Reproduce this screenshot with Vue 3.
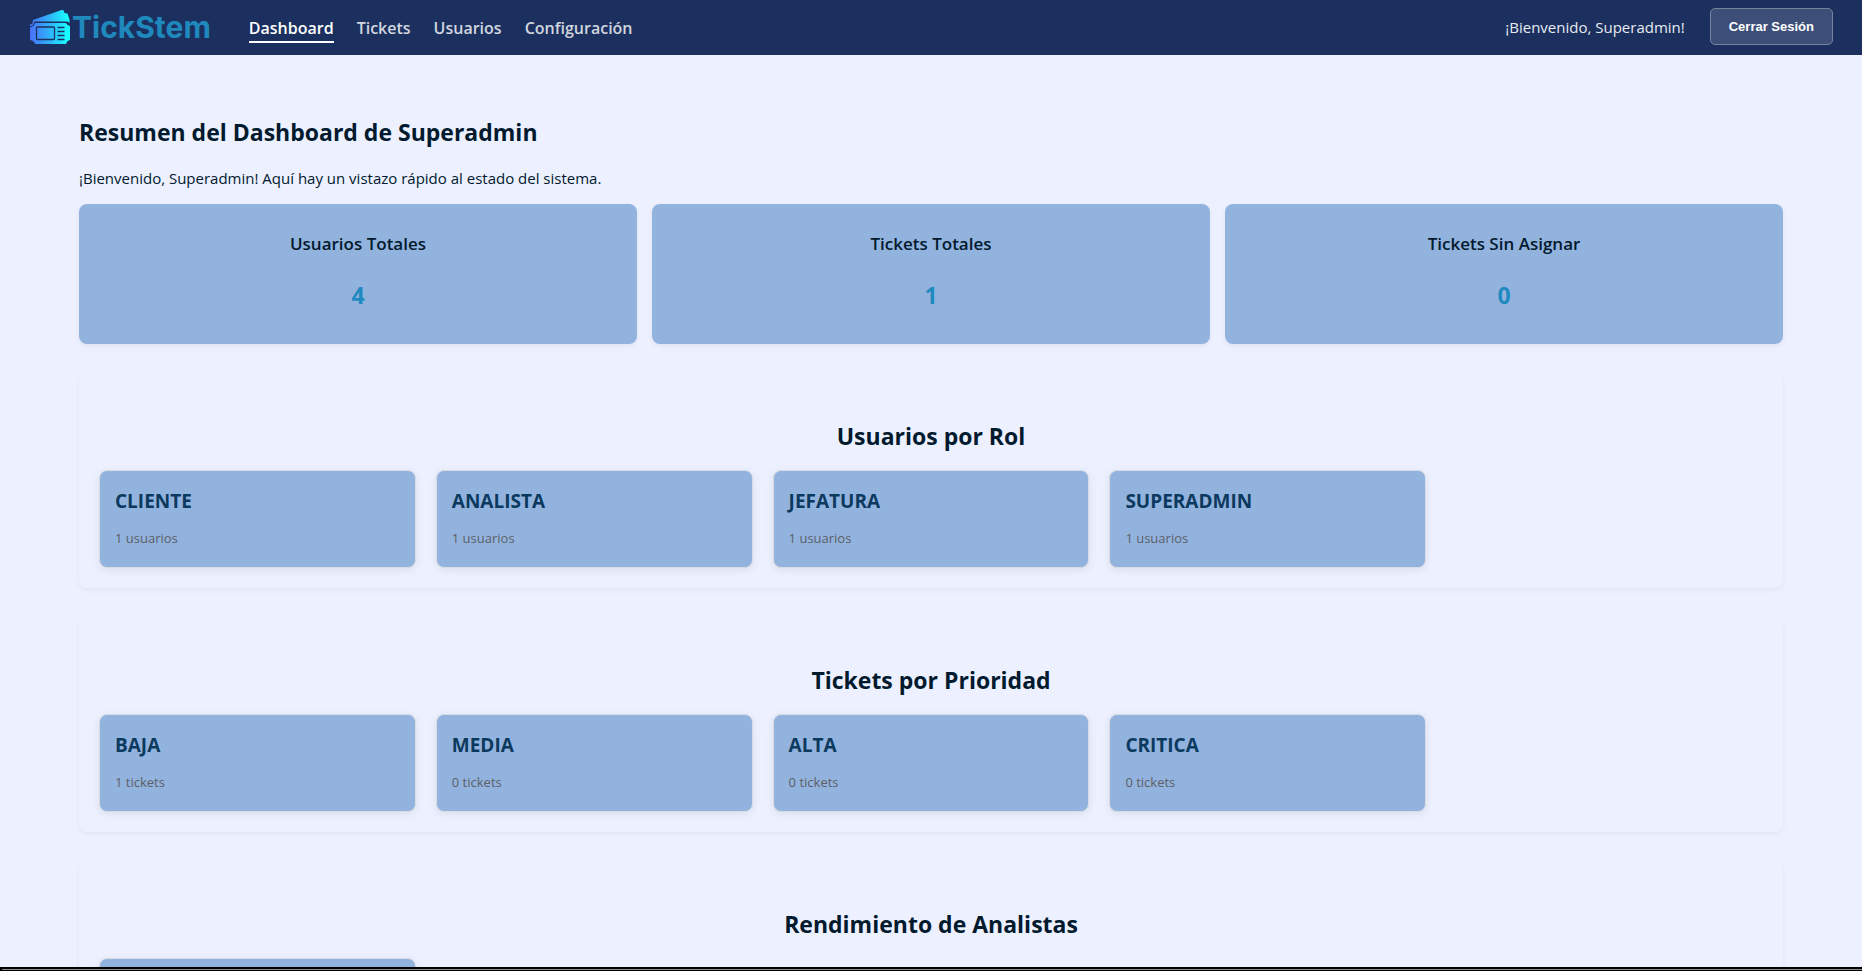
<script setup>
const links = [
  { label: 'Dashboard', active: true },
  { label: 'Tickets', active: false },
  { label: 'Usuarios', active: false },
  { label: 'Configuración', active: false },
]

const totals = [
  { label: 'Usuarios Totales', value: 4 },
  { label: 'Tickets Totales', value: 1 },
  { label: 'Tickets Sin Asignar', value: 0 },
]

const sections = [
  {
    title: 'Usuarios por Rol',
    items: [
      { name: 'CLIENTE', detail: '1 usuarios' },
      { name: 'ANALISTA', detail: '1 usuarios' },
      { name: 'JEFATURA', detail: '1 usuarios' },
      { name: 'SUPERADMIN', detail: '1 usuarios' },
    ],
  },
  {
    title: 'Tickets por Prioridad',
    items: [
      { name: 'BAJA', detail: '1 tickets' },
      { name: 'MEDIA', detail: '0 tickets' },
      { name: 'ALTA', detail: '0 tickets' },
      { name: 'CRITICA', detail: '0 tickets' },
    ],
  },
  { title: 'Rendimiento de Analistas', items: [{ name: '', detail: '' }] },
]
</script>

<template>
  <div class="page">
    <header class="topbar">
      <a class="brand" href="#">
        <svg class="brand-icon" viewBox="0 0 42 36" aria-hidden="true">
          <defs>
            <linearGradient id="ticket" gradientUnits="userSpaceOnUse" x1="0" y1="0" x2="42" y2="0">
              <stop offset="0" stop-color="#4a6cf7" />
              <stop offset="0.5" stop-color="#2fb4fb" />
              <stop offset="0.9" stop-color="#18fbff" />
            </linearGradient>
          </defs>
          <path
            fill="url(#ticket)"
            d="M0.500 16 L3.500 14.500 L4 11 L32.500 1 L34.500 1.200 L35.500 4 L38.500 4.500 L40.500 10.500 L40.500 14 L38.500 12.500 L5.500 12.500 L4 16 L1.500 17.500Z"
          />
          <path
            fill="url(#ticket)"
            d="M6 14 H37 Q38 16.500 41 17 V31 Q38 31.500 37 35 H6 Q5 31.500 1 31 V18.500 Q5 17.500 6 14Z"
          />
          <rect x="7.500" y="18" width="18" height="12.500" rx="1" fill="none" stroke="#1b305f" stroke-width="1.300" />
          <path d="M28.500 18.500 H35.500 M28.500 22.500 H35.500 M28.500 26.500 H35.500 M28.500 30.500 H35.500" stroke="#1b305f" stroke-width="1.300" />
        </svg>
        <span class="brand-name">TickStem</span>
      </a>
      <nav class="nav">
        <a v-for="link in links" :key="link.label" href="#" class="nav-link" :class="{ active: link.active }">{{ link.label }}</a>
      </nav>
      <div class="session">
        <span class="welcome">¡Bienvenido, Superadmin!</span>
        <button type="button" class="logout">Cerrar Sesión</button>
      </div>
    </header>

    <main class="content">
      <h1 class="title">Resumen del Dashboard de Superadmin</h1>
      <p class="intro">¡Bienvenido, Superadmin! Aquí hay un vistazo rápido al estado del sistema.</p>

      <div class="totals">
        <article v-for="total in totals" :key="total.label" class="total">
          <h3 class="total-label">{{ total.label }}</h3>
          <p class="total-value">{{ total.value }}</p>
        </article>
      </div>

      <section v-for="section in sections" :key="section.title" class="panel">
        <h2 class="panel-title">{{ section.title }}</h2>
        <div class="grid">
          <article v-for="item in section.items" :key="item.name" class="item">
            <h4 class="item-name">{{ item.name }}</h4>
            <p class="item-detail">{{ item.detail }}</p>
          </article>
        </div>
      </section>
    </main>

    <div class="bottom-edge"></div>
  </div>
</template>

<style>
body {
  margin: 0;
  background: #ecf0ff;
}
</style>

<style scoped>
.page {
  display: flex;
  flex-direction: column;
  height: 100vh;
  overflow: hidden;
  background: #ecf0ff;
  color: #021a2e;
  font-family: "Segoe UI", "Open Sans", "Noto Sans", sans-serif;
  font-size: 15px;
}

.topbar {
  display: flex;
  flex: none;
  align-items: center;
  height: 55px;
  padding: 0 29px 2px;
  box-sizing: border-box;
  background: #1b305f;
}

.brand {
  display: flex;
  align-items: center;
  gap: 1px;
  margin-right: 38px;
  color: #1f88bd;
  text-decoration: none;
}

.brand-icon {
  width: 42px;
  height: 36px;
}

.brand-name {
  font: 700 30px/34px Inter, sans-serif;
}

.nav {
  display: flex;
  gap: 23px;
}

.nav-link {
  padding: 6px 0 2px;
  border-bottom: 2px solid transparent;
  color: #d1d6df;
  font-size: 16px;
  font-weight: 600;
  line-height: 22px;
  text-decoration: none;
}

.nav-link.active {
  border-color: #fff;
  color: #fff;
}

.session {
  display: flex;
  align-items: center;
  gap: 25px;
  margin-left: auto;
}

.welcome {
  color: #e8eaef;
  line-height: 24px;
}

.logout {
  height: 37px;
  padding: 0 18px;
  border: 1px solid #76839f;
  border-radius: 5px;
  background: #3d4f78;
  color: #fff;
  font: 700 13px "Liberation Sans", Arial, sans-serif;
}

.content {
  flex: 1;
  min-height: 0;
  overflow: hidden;
  padding: 61px 79px 0;
}

.title {
  margin: 0;
  font-size: 23px;
  line-height: 32px;
}

.intro {
  margin: 18px 0 14px;
  line-height: 24px;
}

.totals {
  display: grid;
  grid-template-columns: repeat(3, 1fr);
  gap: 15px;
}

.total {
  height: 140px;
  padding-top: 27px;
  box-sizing: border-box;
  border-radius: 8px;
  background: #93b3df;
  box-shadow: 0 2px 5px rgba(0, 0, 0, 0.06);
  text-align: center;
}

.total-label {
  margin: 0;
  font-size: 17px;
  font-weight: 600;
  line-height: 26px;
}

.total-value {
  margin: 22px 0 0;
  color: #1f8ac0;
  font-size: 23px;
  font-weight: 700;
  line-height: 32px;
}

.panel {
  margin-top: 30px;
  padding: 46px 20px 20px;
  border-radius: 8px;
  box-shadow: 0 2px 5px rgba(0, 0, 0, 0.05);
}

.panel-title {
  margin: 0 0 18px;
  font-size: 23px;
  line-height: 32px;
  text-align: center;
}

.grid {
  display: grid;
  grid-template-columns: repeat(auto-fill, minmax(280px, 1fr));
  gap: 20px;
}

.item {
  height: 98px;
  padding: 17px 15px;
  box-sizing: border-box;
  border: 1px solid #d9dce2;
  border-radius: 8px;
  background: #93b3df;
  box-shadow: 0 2px 8px rgba(0, 0, 0, 0.08);
}

.item-name {
  margin: 0 0 14px;
  color: #0b3a5e;
  font-size: 19px;
  line-height: 26px;
}

.item-detail {
  margin: 0;
  color: #5c5f66;
  font-size: 13px;
  line-height: 20px;
}

.bottom-edge {
  flex: none;
  height: 1px;
  border: solid #000;
  border-width: 2px 0 1px 2px;
  background: #8c8c8c;
}
</style>
